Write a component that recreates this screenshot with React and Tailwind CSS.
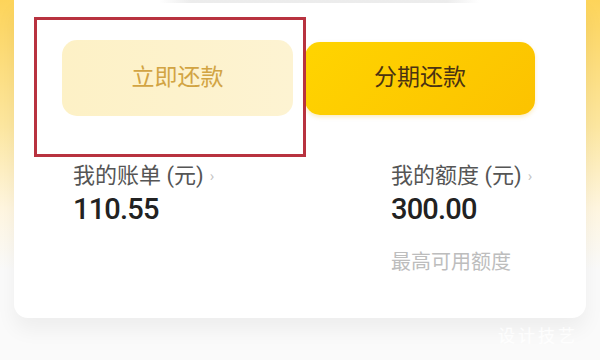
import React from 'react';

const font = { fontFamily: '"Roboto", "Noto Sans CJK SC", sans-serif' };

const Stat = ({ label, value, note }) => (
  <div className="flex flex-col">
    <div className="flex items-center h-[26px] text-[22px] leading-[26px] text-[#555]">
      <span>{label}</span>
      <span className="ml-[6px] text-[15px] text-[#c4c4c4]">›</span>
    </div>
    <div className="mt-[3px] h-[34px] text-[29px] leading-[34px] font-medium text-[#222] tracking-[-0.8px]">
      {value}
    </div>
    {note && (
      <div className="mt-[24px] text-[20px] leading-[24px] text-[#bdbdbd]">{note}</div>
    )}
  </div>
);

export default function App() {
  return (
    <div
      className="relative w-[600px] h-[360px] overflow-hidden bg-[linear-gradient(180deg,#fdd45a_0%,#fde7a0_35%,#fff6e0_58%,#fafafa_75%)]"
      style={font}
    >
      {/* card */}
      <div className="mx-[14px] h-[318px] bg-white rounded-b-[14px] shadow-[0_12px_20px_rgba(0,0,0,0.05)] relative">
        {/* remnants of a line of text above the crop */}
        <div className="absolute left-[145px] top-0 w-[320px] h-[3px] bg-[linear-gradient(90deg,transparent,#e4e4e4_10%,#e4e4e4_90%,transparent)] opacity-70" />

        <div className="flex gap-[12px] pl-[48px] pt-[40px]">
          <button className="w-[231px] h-[76px] rounded-[15px] bg-[linear-gradient(90deg,#fdf1c6,#fdf3d2)] text-[23px] text-[#d2a443]">
            立即还款
          </button>
          <button className="w-[230px] h-[73px] mt-[2px] rounded-[15px] bg-[linear-gradient(135deg,#ffd400,#fcc200)] shadow-[0_2px_4px_rgba(240,180,0,0.25)] text-[23px] text-[#4a3312]">
            分期还款
          </button>
        </div>

        <div className="flex pl-[59px] pt-[47px]">
          <div className="w-[318px]">
            <Stat label="我的账单 (元)" value="110.55" />
          </div>
          <Stat label="我的额度 (元)" value="300.00" note="最高可用额度" />
        </div>
      </div>

      {/* annotation box */}
      <div className="absolute left-[34px] top-[17px] w-[272px] h-[140px] border-[3px] border-[#b8323f]" />

      {/* watermark */}
      <div className="absolute right-[22px] top-[324px] text-[17px] text-white/80 tracking-[3px]">
        设计技艺
      </div>
    </div>
  );
}
